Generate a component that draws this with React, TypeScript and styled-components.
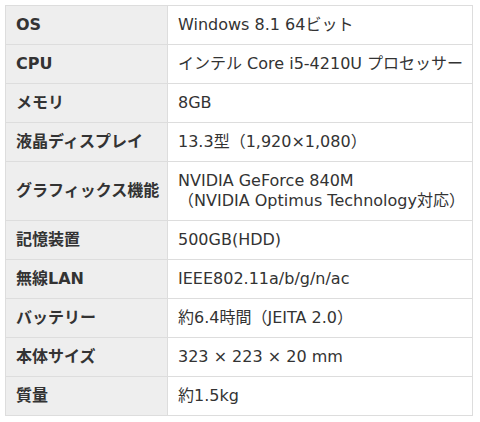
import React from "react";
import styled, { createGlobalStyle } from "styled-components";

const GlobalStyle = createGlobalStyle`
  html, body { margin: 0; padding: 0; background: #ffffff; }
`;

const Page = styled.div`
  padding: 5px;
`;

const SpecTable = styled.table`
  width: 468px;
  table-layout: fixed;
  border-collapse: collapse;
  font-family: "DejaVu Sans", "Noto Sans CJK JP", sans-serif;
  font-size: 16px;
  line-height: 20px;
  color: #333333;
`;

const Head = styled.th`
  width: 141px;
  background: #eeeeee;
  border: 1px solid #dddddd;
  padding: 9px 10px;
  text-align: left;
  font-weight: bold;
  white-space: nowrap;
`;

const Cell = styled.td`
  border: 1px solid #dddddd;
  padding: 9px 10px;
  text-align: left;
  font-weight: normal;
  white-space: nowrap;
`;

const rows: [string, React.ReactNode][] = [
  ["OS", "Windows 8.1 64ビット"],
  ["CPU", "インテル Core i5-4210U プロセッサー"],
  ["メモリ", "8GB"],
  ["液晶ディスプレイ", "13.3型（1,920×1,080）"],
  [
    "グラフィックス機能",
    <>
      NVIDIA GeForce 840M
      <br />
      （NVIDIA Optimus Technology対応）
    </>,
  ],
  ["記憶装置", "500GB(HDD)"],
  ["無線LAN", "IEEE802.11a/b/g/n/ac"],
  ["バッテリー", "約6.4時間（JEITA 2.0）"],
  ["本体サイズ", "323 × 223 × 20 mm"],
  ["質量", "約1.5kg"],
];

export default function App() {
  return (
    <>
      <GlobalStyle />
      <Page>
        <SpecTable>
          <tbody>
            {rows.map(([k, v]) => (
              <tr key={k}>
                <Head>{k}</Head>
                <Cell>{v}</Cell>
              </tr>
            ))}
          </tbody>
        </SpecTable>
      </Page>
    </>
  );
}
